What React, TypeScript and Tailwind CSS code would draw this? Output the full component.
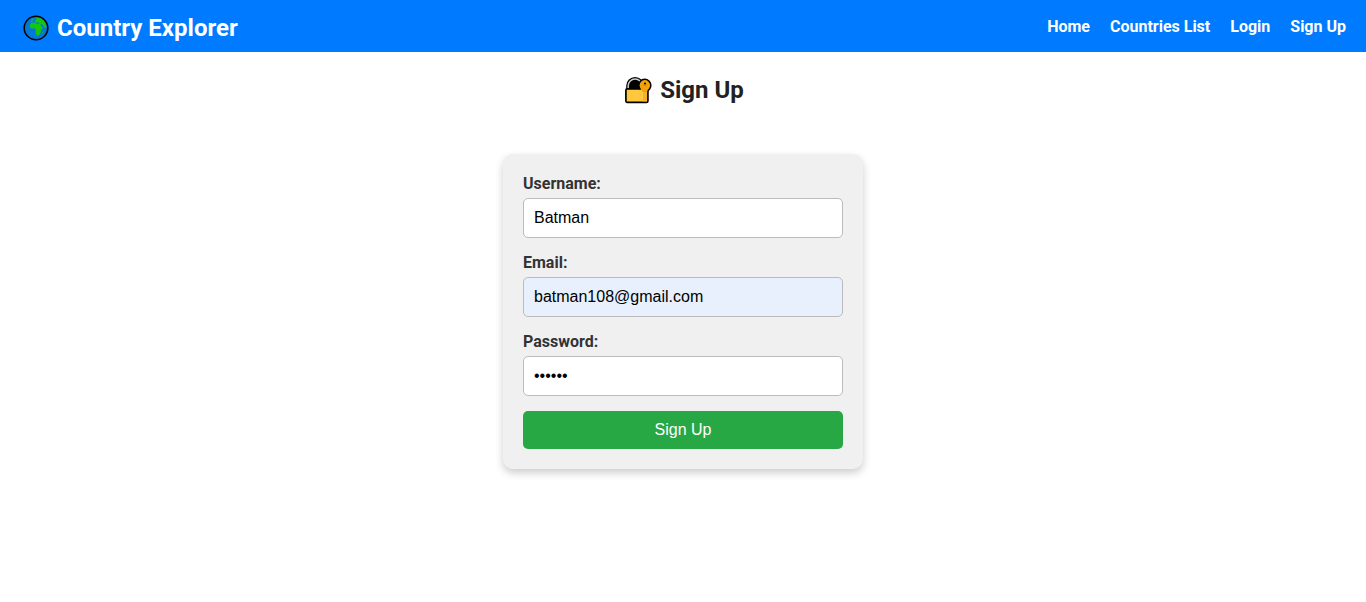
import { useState } from "react";

function GlobeIcon() {
  return (
    <svg viewBox="0 0 26 26" className="size-[26px] shrink-0" aria-hidden="true">
      <circle cx="13" cy="13" r="11.8" fill="#0078d7" stroke="#000" strokeWidth="1.5" />
      <path
        d="M13.4 2.6 Q17.6 2.6 20.6 5.6 Q23.2 8.6 23.2 12 L21.8 13.4 L20.6 11 L19.2 9.2 L17 9 L15.6 7.6 L12.4 7.4 L11.4 6.4 L13.2 4.8 Z"
        fill="#16c60c"
      />
      <path
        d="M6.8 9.8 L8.6 7.8 L12 7.8 L13.6 8.8 L17 8.6 L18.4 11.6 L20 12.8 L18.2 15 L17.4 18 L15.6 20.8 L14 21 L12.6 18 L12.8 14.6 L11.6 13.2 L8.4 13.4 L6.8 11.8 Z"
        fill="#16c60c"
      />
      <path
        d="M7.4 7 L8.2 5.6 L10 5.8 L9.2 7.2 Z M8.4 4.4 L10.6 3.2 L10.8 4.6 L9.4 5.2 Z M19 18.8 L19.8 16.6 L20.2 17.6 L19.6 19.2 Z"
        fill="#16c60c"
      />
    </svg>
  );
}

function LockIcon() {
  return (
    <svg viewBox="0 0 28 28" className="size-7 shrink-0" aria-hidden="true">
      <path d="M2.2 14 V9.8 A8.9 8.9 0 0 1 20 9.8 V14 Z" fill="#000" />
      <path d="M4.2 12 V9.8 A6.9 6.9 0 0 1 18 9.8 V12" fill="none" stroke="#cccccc" strokeWidth="1.5" />
      <rect x="1.9" y="12.9" width="22" height="13.4" rx="1.4" fill="#ffc83d" stroke="#000" strokeWidth="1.7" />
      <path d="M19 13.7 H23.1 V25.4 H19 Z" fill="#f7b02c" />
      <path d="M16.4 13.4 A6 6 0 1 1 25.6 13 L23.9 14.8" fill="#f0a30a" stroke="#000" strokeWidth="1.5" />
      <path d="M16.8 13 H23.1 V16 H18.6 Z" fill="#f0a30a" />
      <circle cx="21" cy="7.4" r="1" fill="#000" />
      <path d="M19.6 9.2 H22.4" stroke="#a86500" strokeWidth="0.6" />
    </svg>
  );
}

const links = ["Home", "Countries List", "Login", "Sign Up"];

const fields = [
  { id: "username", label: "Username:", type: "text", value: "Batman", bg: "bg-white" },
  { id: "email", label: "Email:", type: "email", value: "batman108@gmail.com", bg: "bg-[#e8f0fe]" },
  { id: "password", label: "Password:", type: "password", value: "batman", bg: "bg-white" },
];

export default function App() {
  const [values, setValues] = useState<Record<string, string>>(
    Object.fromEntries(fields.map((f) => [f.id, f.value])),
  );

  return (
    <div className="min-h-screen bg-white font-['Roboto',sans-serif] text-[#222]">
      <header className="flex items-center justify-between bg-[#007bff] px-5 py-2.5 text-white">
        <div className="flex items-center gap-2 pt-1 pl-[3px] text-2xl leading-7 font-bold">
          <GlobeIcon />
          <span>Country Explorer</span>
        </div>
        <nav className="flex gap-5 pt-0.5 text-base font-bold">
          {links.map((link) => (
            <a key={link} href="#">
              {link}
            </a>
          ))}
        </nav>
      </header>

      <main className="flex flex-col items-center px-5 pt-6 pb-10">
        <h1 className="flex items-center gap-2 pl-0.5 text-2xl leading-7 font-bold">
          <LockIcon />
          <span>Sign Up</span>
        </h1>

        <form
          onSubmit={(e) => e.preventDefault()}
          className="mt-[50px] flex w-full max-w-[360px] flex-col gap-[15px] rounded-[10px] bg-[#f0f0f0] p-5 shadow-[0_4px_8px_rgba(0,0,0,0.2)]"
        >
          {fields.map((f) => (
            <div key={f.id} className="flex flex-col gap-[5px]">
              <label htmlFor={f.id} className="text-base leading-[19px] font-bold text-[#333]">
                {f.label}
              </label>
              <input
                id={f.id}
                type={f.type}
                value={values[f.id]}
                onChange={(e) => setValues({ ...values, [f.id]: e.target.value })}
                className={`h-10 w-full rounded-[5px] border border-[#bbb] px-2.5 font-['Liberation_Sans',sans-serif] text-base text-black ${f.bg}`}
              />
            </div>
          ))}
          <button
            type="submit"
            className="h-[38px] rounded-[5px] bg-[#28a745] font-['Liberation_Sans',sans-serif] text-base text-white"
          >
            Sign Up
          </button>
        </form>
      </main>
    </div>
  );
}
